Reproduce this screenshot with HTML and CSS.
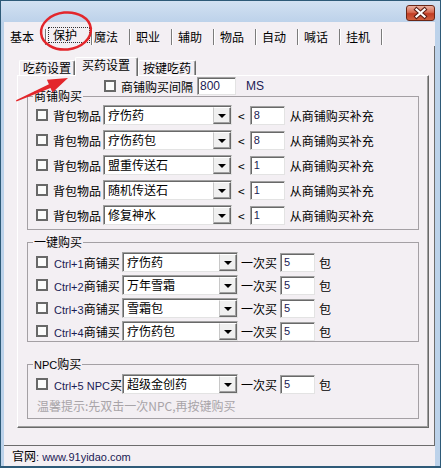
FILE: index.html
```html
<!DOCTYPE html>
<html lang="zh-CN">
<head>
    <meta charset="UTF-8">
    <meta name="viewport" content="width=device-width, initial-scale=1.0">
    <title>保护 - 买药设置</title>
    <link rel="stylesheet" href="styles.css">
</head>
<body>

    <div class="window">
        <div class="titlebar">
            <div class="close-btn">
                <svg width="27" height="14" viewBox="0 0 27 14">
                    <path d="M9.5 3.5 L17.5 10.5 M17.5 3.5 L9.5 10.5" stroke="#5a1d12" stroke-width="4.2" stroke-linecap="square"/>
                    <path d="M9.5 3.5 L17.5 10.5 M17.5 3.5 L9.5 10.5" stroke="#fff" stroke-width="2.2" stroke-linecap="square"/>
                </svg>
            </div>
        </div>

        <div class="client">
            <div class="tabs">
                <span class="tab">基本</span>
                <span class="tab active"><span class="focus">保护</span></span>
                <span class="tab next">魔法</span>
                <span class="tab">职业</span>
                <span class="tab">辅助</span>
                <span class="tab">物品</span>
                <span class="tab">自动</span>
                <span class="tab">喊话</span>
                <span class="tab">挂机</span>
            </div>

            <div class="page">
                <div class="subtabs">
                    <span class="subtab first">吃药设置</span>
                    <span class="subtab active">买药设置</span>
                    <span class="subtab last">按键吃药</span>
                </div>

                <div class="subpage">
                    <div class="interval">
                        <span class="check"></span>
                        <span class="label">商铺购买间隔</span>
                        <span class="edit wide lat">800</span>
                        <span class="unit lat">MS</span>
                    </div>

                    <fieldset class="group shop">
                        <legend>商铺购买</legend>
                        <div class="row">
                            <span class="check"></span>
                            <span class="label">背包物品</span>
                            <span class="combo"><span class="combo-text">疗伤药</span><span class="drop"></span></span>
                            <span class="lt">&lt;</span>
                            <span class="edit lat">8</span>
                            <span class="label">从商铺购买补充</span>
                        </div>
                        <div class="row">
                            <span class="check"></span>
                            <span class="label">背包物品</span>
                            <span class="combo"><span class="combo-text">疗伤药包</span><span class="drop"></span></span>
                            <span class="lt">&lt;</span>
                            <span class="edit lat">8</span>
                            <span class="label">从商铺购买补充</span>
                        </div>
                        <div class="row">
                            <span class="check"></span>
                            <span class="label">背包物品</span>
                            <span class="combo"><span class="combo-text">盟重传送石</span><span class="drop"></span></span>
                            <span class="lt">&lt;</span>
                            <span class="edit lat">1</span>
                            <span class="label">从商铺购买补充</span>
                        </div>
                        <div class="row">
                            <span class="check"></span>
                            <span class="label">背包物品</span>
                            <span class="combo"><span class="combo-text">随机传送石</span><span class="drop"></span></span>
                            <span class="lt">&lt;</span>
                            <span class="edit lat">1</span>
                            <span class="label">从商铺购买补充</span>
                        </div>
                        <div class="row">
                            <span class="check"></span>
                            <span class="label">背包物品</span>
                            <span class="combo"><span class="combo-text">修复神水</span><span class="drop"></span></span>
                            <span class="lt">&lt;</span>
                            <span class="edit lat">1</span>
                            <span class="label">从商铺购买补充</span>
                        </div>
                    </fieldset>

                    <fieldset class="group hotkey">
                        <legend>一键购买</legend>
                        <div class="row">
                            <span class="check"></span>
                            <span class="key"><span class="lat">Ctrl+1</span>商铺买</span>
                            <span class="combo short"><span class="combo-text">疗伤药</span><span class="drop"></span></span>
                            <span class="once">一次买</span>
                            <span class="edit lat">5</span>
                            <span class="pack">包</span>
                        </div>
                        <div class="row">
                            <span class="check"></span>
                            <span class="key"><span class="lat">Ctrl+2</span>商铺买</span>
                            <span class="combo short"><span class="combo-text">万年雪霜</span><span class="drop"></span></span>
                            <span class="once">一次买</span>
                            <span class="edit lat">5</span>
                            <span class="pack">包</span>
                        </div>
                        <div class="row">
                            <span class="check"></span>
                            <span class="key"><span class="lat">Ctrl+3</span>商铺买</span>
                            <span class="combo short"><span class="combo-text">雪霜包</span><span class="drop"></span></span>
                            <span class="once">一次买</span>
                            <span class="edit lat">5</span>
                            <span class="pack">包</span>
                        </div>
                        <div class="row">
                            <span class="check"></span>
                            <span class="key"><span class="lat">Ctrl+4</span>商铺买</span>
                            <span class="combo short"><span class="combo-text">疗伤药包</span><span class="drop"></span></span>
                            <span class="once">一次买</span>
                            <span class="edit lat">5</span>
                            <span class="pack">包</span>
                        </div>
                    </fieldset>

                    <fieldset class="group npc">
                        <legend><span class="lat">NPC</span>购买</legend>
                        <div class="row">
                            <span class="check"></span>
                            <span class="key"><span class="lat">Ctrl+5 NPC</span>买</span>
                            <span class="combo short"><span class="combo-text">超级金创药</span><span class="drop"></span></span>
                            <span class="once">一次买</span>
                            <span class="edit lat">5</span>
                            <span class="pack">包</span>
                        </div>
                        <div class="hint">温馨提示:先双击一次NPC,再按键购买</div>
                    </fieldset>
                </div>
            </div>

            <div class="status">官网<span class="lat">: www.91yidao.com</span></div>
        </div>

        <!-- red marks drawn over the screenshot -->
        <svg class="marks" width="441" height="468" viewBox="0 0 441 468">
            <ellipse cx="66" cy="31" rx="25" ry="18.5" transform="rotate(-6 66 31)" fill="none" stroke="#e3262b" stroke-width="2.5"/>
            <polygon points="16,100.3 48.9,84.3 46.9,79.7 68,78 52.5,92.5 50.5,87.9 16.5,101.6" fill="#e3262b"/>
        </svg>
    </div>

</body>
</html>
```

FILE: styles.css
```css
* {
    box-sizing: border-box;
}
body {
    margin: 0;
    font-family: "Noto Sans CJK SC", "Liberation Sans", sans-serif;
    font-size: 12px;
    color: #000;
    background: #fff;
}
.lat {
    font-family: "Liberation Sans", Arial, sans-serif;
    font-size: 11px;
    color: #1b1b55;
}

/* window frame */
.window {
    position: relative;
    width: 441px;
    height: 468px;
    border: 1px solid #2e5a78;
    border-bottom-width: 2px;
    background: #bcd2ea;
    padding: 0 5px 0 3px;
    display: flex;
    flex-direction: column;
}
.titlebar {
    height: 21px;
    margin: 0 -5px 0 -3px;
    padding: 4px 5px 0 0;
    background: linear-gradient(#d2e1f2, #bdd2ea);
    display: flex;
    justify-content: flex-end;
    align-items: flex-start;
}
.close-btn {
    width: 29px;
    height: 16px;
    border: 1px solid #6a2616;
    border-radius: 3px;
    background: linear-gradient(#eab0a0, #d86b52 45%, #c23d24 55%, #d0603f);
    display: flex;
    align-items: center;
    justify-content: center;
}
.client {
    flex: 1;
    background: #f3eff3;
    display: flex;
    flex-direction: column;
}

/* top tabs */
.tabs {
    height: 24px;
    padding-top: 7px;
    display: flex;
}
.tab {
    width: 42px;
    height: 16px;
    line-height: 16px;
    padding-left: 6px;
    border-right: 1px solid #7b7b7b;
    box-shadow: 1px 0 0 #fff;
    flex: none;
}
.tab.active {
    width: 46px;
    padding-left: 2px;
}
.tab.next {
    width: 38px;
    padding-left: 2px;
}
.focus {
    display: block;
    width: 42px;
    height: 16px;
    margin-top: -2px;
    padding-left: 4px;
    line-height: 14px;
    border: 1px dotted #333;
}

/* outer tab page */
.page {
    height: 400px;
    padding: 11px 5px 0 13px;
    border-right: 1px solid #6c6c6c;
    border-bottom: 1px solid #6c6c6c;
}
.subtabs {
    height: 18px;
    padding-left: 2px;
    display: flex;
    align-items: flex-start;
}
.subtab {
    height: 15px;
    margin-top: 3px;
    line-height: 14px;
    border: 1px solid #fff;
    border-bottom: none;
    border-right-color: #696969;
    border-radius: 2px 2px 0 0;
    box-shadow: inset -1px 0 0 #a0a0a0;
    background: #f3eff3;
    flex: none;
}
.subtab.first {
    width: 56px;
    padding-left: 3px;
}
.subtab.active {
    position: relative;
    z-index: 1;
    width: 63px;
    height: 19px;
    margin-top: 0;
    padding-left: 6px;
}
.subtab.last {
    width: 58px;
    padding-left: 4px;
}
.subpage {
    height: 353px;
    padding: 0 9px 0 9px;
    border: 1px solid #fff;
    border-right-color: #696969;
    border-bottom-color: #696969;
    box-shadow: inset -1px -1px 0 #a0a0a0;
}

/* controls */
.check {
    width: 12px;
    height: 12px;
    border: 2px solid #686868;
    background: #fbfbfb;
    flex: none;
}
.label {
    margin-left: 5px;
    white-space: nowrap;
}
.combo {
    width: 129px;
    height: 20px;
    margin-left: 2px;
    background: #fff;
    border: 1px solid;
    border-color: #a0a0a0 #e3e3e3 #e3e3e3 #a0a0a0;
    box-shadow: inset 1px 1px 0 #696969;
    display: flex;
    flex: none;
}
.combo.short {
    width: 116px;
    margin-left: 0;
}
.combo-text {
    flex: 1;
    padding: 1px 0 0 4px;
    line-height: 16px;
    white-space: nowrap;
}
.drop {
    width: 18px;
    margin: 1px 0 0;
    background: #f0f0f0;
    border: 1px solid;
    border-color: #fff #6a6a6a #6a6a6a #c8c8c8;
    box-shadow: inset -1px -1px 0 #a0a0a0;
    display: flex;
    align-items: center;
    justify-content: center;
}
.drop::after {
    content: "";
    border-left: 4px solid transparent;
    border-right: 4px solid transparent;
    border-top: 4px solid #000;
    margin: 1px 1px 0 0;
}
.edit {
    width: 35px;
    height: 19px;
    padding-left: 3px;
    line-height: 17px;
    background: #fff;
    border: 1px solid;
    border-color: #a0a0a0 #e3e3e3 #e3e3e3 #a0a0a0;
    box-shadow: inset 1px 1px 0 #696969;
    flex: none;
}
.lt {
    margin-left: 6px;
}
.row .lt + .edit {
    margin-left: 5px;
}

/* interval line */
.interval {
    height: 18px;
    margin-top: 1px;
    padding-left: 77px;
    display: flex;
    align-items: center;
}
.edit.wide {
    width: 39px;
    height: 18px;
    margin-left: 4px;
    padding-left: 2px;
    line-height: 16px;
    font-size: 12px;
}
.unit {
    margin-left: 10px;
    font-size: 12px;
}

/* group boxes */
.group {
    margin: 0;
    width: 392px;
    border: 1px solid #a4a0a4;
    padding: 2px 0 4px 8px;
    display: flex;
    flex-direction: column;
}
.group legend {
    margin-left: -3px;
    padding: 0 1px;
    line-height: 14px;
}
.group legend .lat {
    color: #000;
}
.shop {
    margin-top: -6px;
    gap: 5px;
}
.hotkey {
    margin-top: 5px;
    padding-top: 3px;
    padding-bottom: 0;
    gap: 3px;
}
.npc {
    margin-top: 15px;
    padding-bottom: 4px;
}
.row {
    height: 20px;
    display: flex;
    align-items: center;
}
.key {
    width: 68px;
    margin-left: 6px;
    overflow: hidden;
    white-space: nowrap;
    flex: none;
}
.once {
    margin-left: 3px;
}
.row .once + .edit {
    margin-left: 3px;
}
.pack {
    margin-left: 4px;
}
.hint {
    margin: 4px 0 0 1px;
    line-height: 16px;
    color: #a8a4a8;
}

/* bottom line */
.status {
    height: 20px;
    line-height: 20px;
    padding-left: 8px;
}

.marks {
    position: absolute;
    left: -1px;
    top: -1px;
    pointer-events: none;
}
```
